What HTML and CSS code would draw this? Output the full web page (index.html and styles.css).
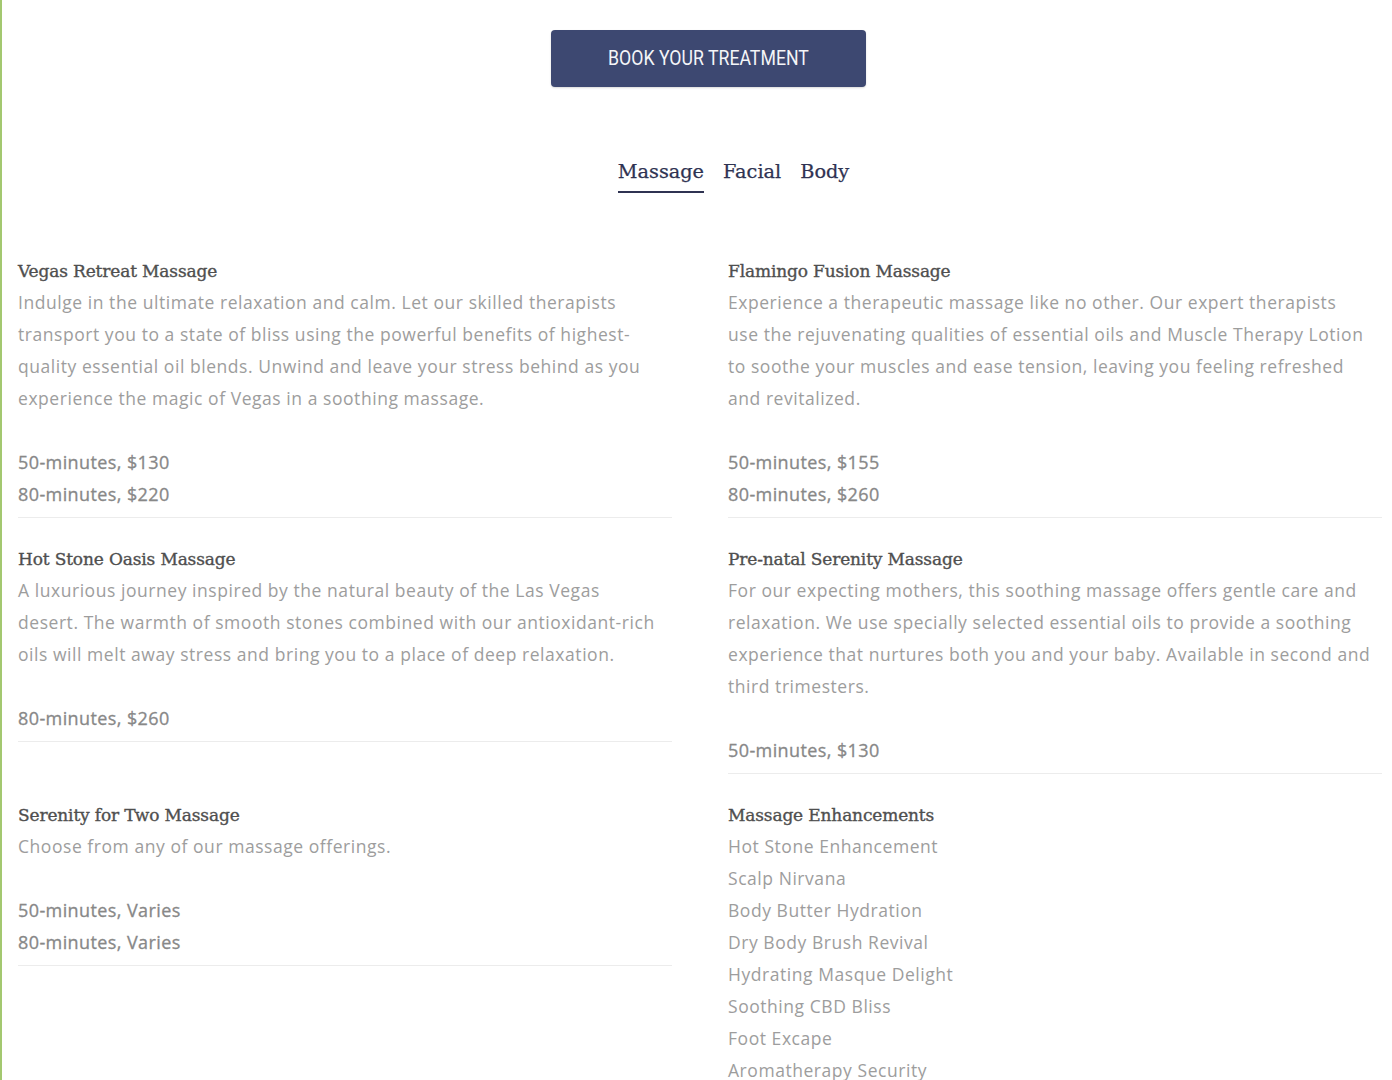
FILE: index.html
```html
<!DOCTYPE html>
<html lang="en">
<head>
<meta charset="utf-8">
<title>Massage Treatments</title>
<link rel="stylesheet" href="styles.css">
</head>
<body>
<div class="page">
  <div class="cta-wrap">
    <a class="cta" href="#"><span class="cta-label">BOOK YOUR TREATMENT</span></a>
  </div>
  <nav class="tabs">
    <a class="tab active" href="#">Massage</a>
    <a class="tab" href="#">Facial</a>
    <a class="tab" href="#">Body</a>
  </nav>
  <div class="menu">
    <div class="item">
      <h3 class="title">Vegas Retreat Massage</h3>
      <p class="desc">Indulge in the ultimate relaxation and calm. Let our skilled therapists transport you to a state of bliss using the powerful benefits of highest-quality essential oil blends. Unwind and leave your stress behind as you experience the magic of Vegas in a soothing massage.</p>
      <div class="prices"><div>50-minutes, $130</div><div>80-minutes, $220</div></div>
    </div>
    <div class="item">
      <h3 class="title">Flamingo Fusion Massage</h3>
      <p class="desc">Experience a therapeutic massage like no other. Our expert therapists use the rejuvenating qualities of essential oils and Muscle Therapy Lotion to soothe your muscles and ease tension, leaving you feeling refreshed and revitalized.</p>
      <div class="prices"><div>50-minutes, $155</div><div>80-minutes, $260</div></div>
    </div>
    <div class="item">
      <h3 class="title">Hot Stone Oasis Massage</h3>
      <p class="desc">A luxurious journey inspired by the natural beauty of the Las Vegas desert. The warmth of smooth stones combined with our antioxidant-rich oils will melt away stress and bring you to a place of deep relaxation.</p>
      <div class="prices"><div>80-minutes, $260</div></div>
    </div>
    <div class="item">
      <h3 class="title">Pre-natal Serenity Massage</h3>
      <p class="desc desc-wide">For our expecting mothers, this soothing massage offers gentle care and relaxation. We use specially selected essential oils to provide a soothing experience that nurtures both you and your baby. Available in second and third trimesters.</p>
      <div class="prices"><div>50-minutes, $130</div></div>
    </div>
    <div class="item">
      <h3 class="title">Serenity for Two Massage</h3>
      <p class="desc">Choose from any of our massage offerings.</p>
      <div class="prices"><div>50-minutes, Varies</div><div>80-minutes, Varies</div></div>
    </div>
    <div class="item plain">
      <h3 class="title">Massage Enhancements</h3>
      <ul class="list">
        <li>Hot Stone Enhancement</li>
        <li>Scalp Nirvana</li>
        <li>Body Butter Hydration</li>
        <li>Dry Body Brush Revival</li>
        <li>Hydrating Masque Delight</li>
        <li>Soothing CBD Bliss</li>
        <li>Foot Excape</li>
        <li>Aromatherapy Security</li>
      </ul>
    </div>
  </div>
</div>
</body>
</html>
```
FILE: styles.css
```css
html, body {
  margin: 0;
  padding: 0;
  background: #ffffff;
}
body {
  border-left: 2px solid #a3c870;
  height: 1080px;
  box-sizing: border-box;
  overflow: hidden;
}
.page {
  padding: 30px 10px 0 16px;
}
.cta-wrap {
  display: flex;
  justify-content: center;
  padding-left: 17px;
}
.cta {
  display: flex;
  align-items: center;
  justify-content: center;
  width: 315px;
  height: 57px;
  box-sizing: border-box;
  padding-bottom: 2px;
  background: #3d4871;
  border-radius: 4px;
  color: #f4f5f8;
  text-decoration: none;
  font-family: "Roboto", sans-serif;
  font-size: 20px;
  box-shadow: 0 1px 2px rgba(0,0,0,0.15);
}
.cta-label {
  display: inline-block;
  white-space: nowrap;
  transform: scaleX(0.885);
}
.tabs {
  display: flex;
  justify-content: center;
  gap: 19px;
  padding-left: 67px;
  margin-top: 70px;
}
.tab {
  font-family: "DejaVu Serif", serif;
  font-size: 19.3px;
  color: #2f3352;
  text-decoration: none;
  padding-bottom: 5px;
  border-bottom: 2px solid transparent;
  line-height: 29px;
  -webkit-text-stroke: 0.25px #2f3352;
}
.tab.active {
  border-bottom-color: #2f3352;
}
.menu {
  display: grid;
  grid-template-columns: 654px 654px;
  column-gap: 56px;
  row-gap: 26px;
  align-items: start;
  margin-top: 63px;
}
.item {
  border-bottom: 1px solid #ececec;
  padding-bottom: 7px;
}
.item.plain {
  border-bottom: none;
}
.title {
  margin: 0;
  font-family: "DejaVu Serif", serif;
  font-weight: normal;
  font-size: 17px;
  line-height: 30px;
  color: #4f4f4f;
  letter-spacing: -0.15px;
  -webkit-text-stroke: 0.35px #4f4f4f;
}
.desc {
  margin: 0 0 32px;
  padding-right: 12px;
  font-family: "Open Sans", sans-serif;
  font-size: 17.5px;
  line-height: 32px;
  color: #9d9d9d;
  letter-spacing: 0.55px;
}
.desc-wide {
  padding-right: 4px;
}
.prices {
  font-family: "Open Sans", sans-serif;
  font-size: 18px;
  line-height: 32px;
  color: #888888;
  letter-spacing: 0.4px;
  -webkit-text-stroke: 0.3px #888888;
}
.list {
  list-style: none;
  margin: 0;
  padding: 0;
  font-family: "Open Sans", sans-serif;
  font-size: 17.5px;
  line-height: 32px;
  color: #9d9d9d;
  letter-spacing: 0.55px;
}
```
